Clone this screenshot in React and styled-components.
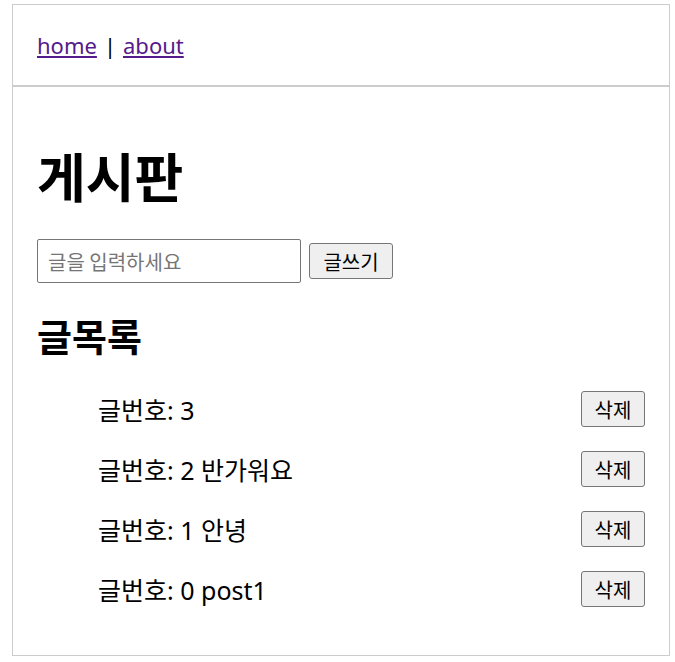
import React, { useState } from "react";
import styled, { createGlobalStyle } from "styled-components";

const GlobalStyle = createGlobalStyle`
  body {
    margin: 0;
    background: #ffffff;
    font-family: "Noto Sans", "Noto Sans CJK KR", sans-serif;
    color: #000000;
  }
`;

const Frame = styled.div`
  margin: 4px 0 0 12px;
  width: 658px;
  height: 652px;
  box-sizing: border-box;
  border: 1px solid #cccccc;
  display: flex;
  flex-direction: column;
`;

const Nav = styled.nav`
  height: 80px;
  display: flex;
  align-items: center;
  padding: 0 24px;
  border-bottom: 2px solid #cccccc;
  font-size: 22px;
`;

const NavLink = styled.a`
  color: #551a8b;
  text-decoration: underline;
`;

const Sep = styled.span`
  margin: 0 7px;
`;

const Content = styled.main`
  padding: 24px;
`;

const Title = styled.h1`
  margin: 37px 0 36px;
  font-size: 53px;
  line-height: 55px;
  font-weight: 700;
  font-family: "Noto Sans CJK KR", sans-serif;
`;

const Form = styled.div`
  display: flex;
  align-items: center;
  gap: 8px;
`;

const Input = styled.input`
  width: 264px;
  height: 44px;
  box-sizing: border-box;
  border: 1px solid #767676;
  border-radius: 2px;
  padding: 0 10px;
  font-size: 20px;
  font-family: "Noto Sans CJK KR", sans-serif;
  &::placeholder {
    color: #757575;
  }
`;

const Button = styled.button`
  height: 36px;
  width: ${(p) => p.$w}px;
  box-sizing: border-box;
  border: 1px solid #767676;
  border-radius: 3px;
  background: #efefef;
  font-size: 20px;
  font-family: "Noto Sans CJK KR", sans-serif;
  color: #000000;
  padding: 0;
`;

const SubTitle = styled.h2`
  margin: 33px 0 25px;
  font-size: 38px;
  line-height: 38px;
  font-weight: 700;
  font-family: "Noto Sans CJK KR", sans-serif;
`;

const List = styled.ul`
  list-style: none;
  margin: 0;
  padding: 0 0 0 61px;
`;

const Row = styled.li`
  height: 60px;
  display: flex;
  align-items: center;
  justify-content: space-between;
  font-size: 25px;
`;

const posts = [
  { id: 3, text: "" },
  { id: 2, text: "반가워요" },
  { id: 1, text: "안녕" },
  { id: 0, text: "post1" },
];

export default function App() {
  const [value, setValue] = useState("");
  return (
    <>
      <GlobalStyle />
      <Frame>
        <Nav>
          <NavLink href="#">home</NavLink>
          <Sep>|</Sep>
          <NavLink href="#">about</NavLink>
        </Nav>
        <Content>
          <Title>게시판</Title>
          <Form>
            <Input
              placeholder="글을 입력하세요"
              value={value}
              onChange={(e) => setValue(e.target.value)}
            />
            <Button $w={84}>글쓰기</Button>
          </Form>
          <SubTitle>글목록</SubTitle>
          <List>
            {posts.map((p) => (
              <Row key={p.id}>
                <span>
                  글번호: {p.id} {p.text}
                </span>
                <Button $w={64}>삭제</Button>
              </Row>
            ))}
          </List>
        </Content>
      </Frame>
    </>
  );
}
